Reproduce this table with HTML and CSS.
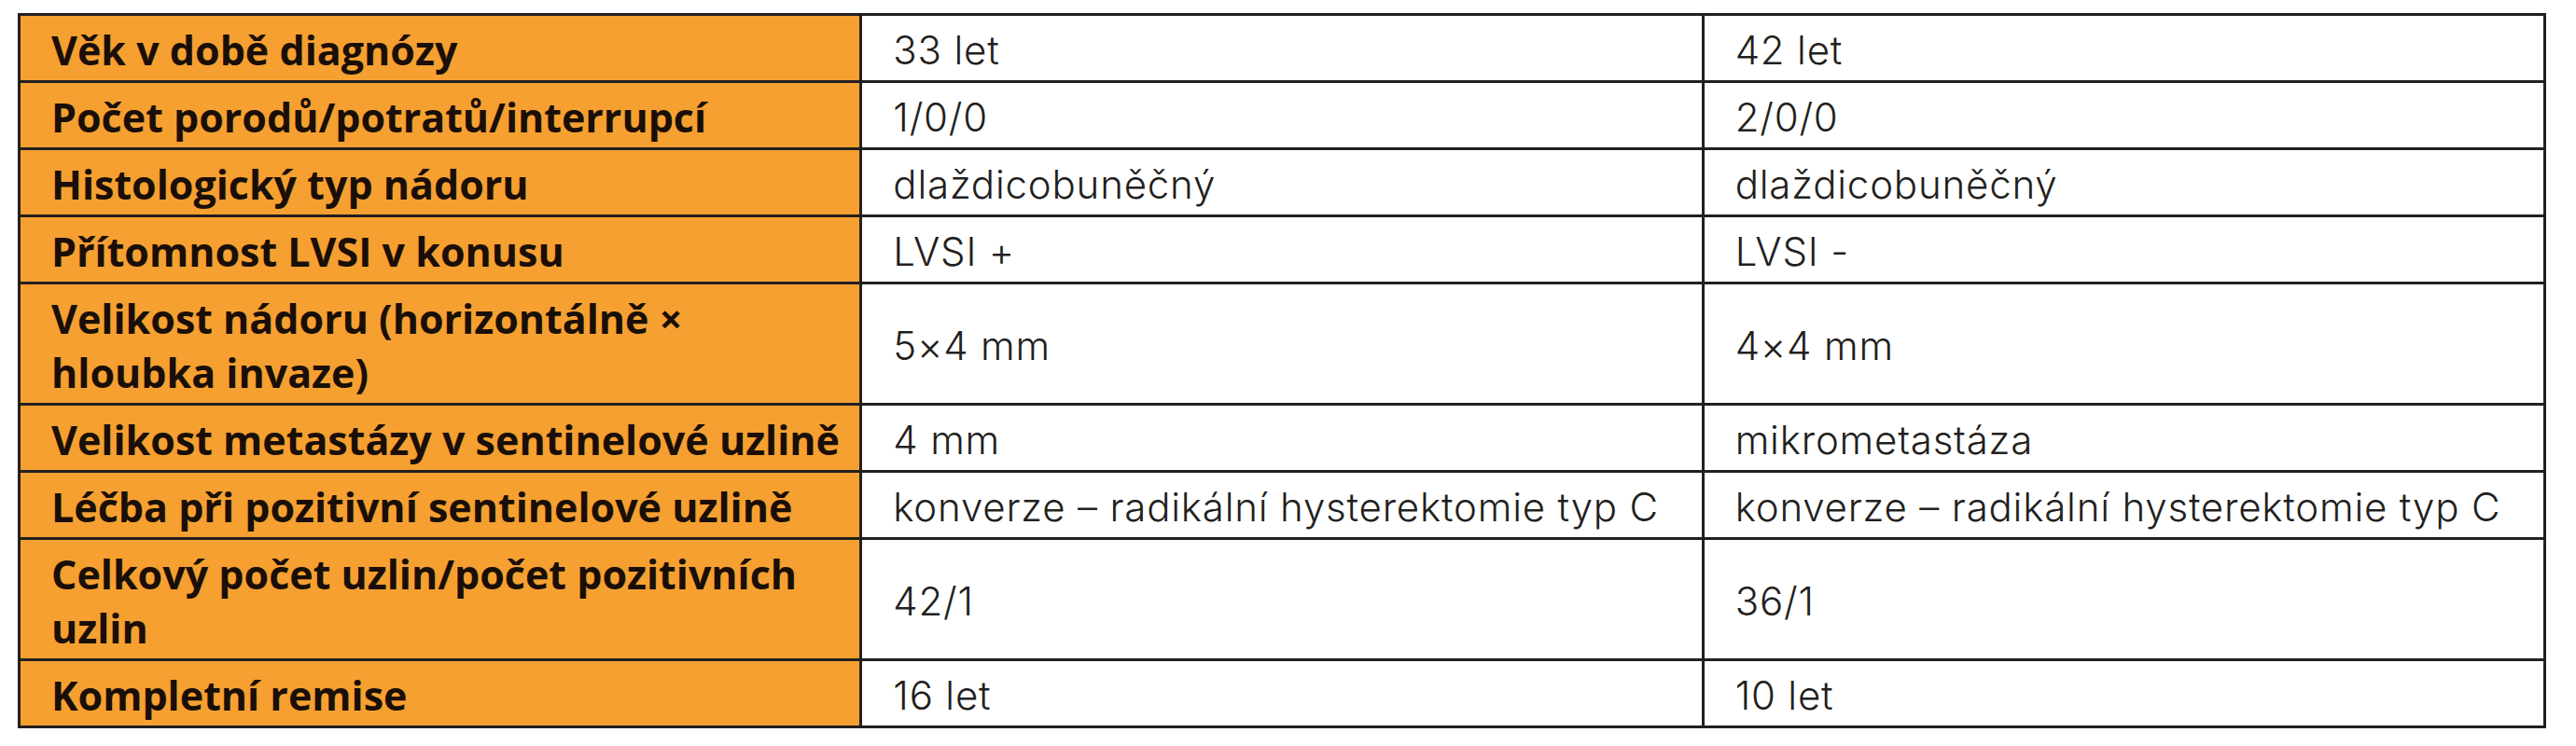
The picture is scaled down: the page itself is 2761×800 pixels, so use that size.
FILE: index.html
```html
<!DOCTYPE html>
<html lang="cs">
<head>
<meta charset="utf-8">
<title>Tabulka</title>
<link rel="stylesheet" href="styles.css">
</head>
<body>
<table class="data">
  <colgroup><col class="c"><col class="c"><col class="c"></colgroup>
  <tbody>
    <tr><th>Věk v době diagnózy</th><td>33 let</td><td>42 let</td></tr>
    <tr><th>Počet porodů/potratů/interrupcí</th><td>1/0/0</td><td>2/0/0</td></tr>
    <tr><th>Histologický typ nádoru</th><td>dlaždicobuněčný</td><td>dlaždicobuněčný</td></tr>
    <tr><th>Přítomnost LVSI v konusu</th><td>LVSI +</td><td>LVSI -</td></tr>
    <tr class="tall"><th>Velikost nádoru (horizontálně ×<br>hloubka invaze)</th><td>5×4 mm</td><td>4×4 mm</td></tr>
    <tr><th>Velikost metastázy v sentinelové uzlině</th><td>4 mm</td><td>mikrometastáza</td></tr>
    <tr><th>Léčba při pozitivní sentinelové uzlině</th><td>konverze – radikální hysterektomie typ C</td><td>konverze – radikální hysterektomie typ C</td></tr>
    <tr class="tall"><th>Celkový počet uzlin/počet pozitivních<br>uzlin</th><td>42/1</td><td>36/1</td></tr>
    <tr><th>Kompletní remise</th><td>16 let</td><td>10 let</td></tr>
  </tbody>
</table>
</body>
</html>
```
FILE: styles.css
```css
html, body {
  margin: 0;
  padding: 0;
  background: #ffffff;
}
body {
  padding: 14px 0 0 19px;
}
.data {
  border-collapse: collapse;
  table-layout: fixed;
  width: 2710px;
}
.data .c {
  width: 33.333%;
}
.data th,
.data td {
  border: 3px solid #231f20;
  height: 72px;
  padding: 4px 33px 0 33px;
  box-sizing: border-box;
  vertical-align: middle;
  text-align: left;
  white-space: nowrap;
}
.data tr.tall th,
.data tr.tall td {
  height: 130px;
}
.data th {
  background: #f5a031;
  color: #1a0f08;
  font-family: "Open Sans", "Liberation Sans", sans-serif;
  font-weight: 700;
  font-size: 43px;
  line-height: 58px;
}
.data td {
  background: #ffffff;
  color: #231f20;
  font-family: Inter, "Open Sans", sans-serif;
  font-weight: 260;
  font-size: 42px;
  letter-spacing: 0.8px;
  line-height: 58px;
}
```
